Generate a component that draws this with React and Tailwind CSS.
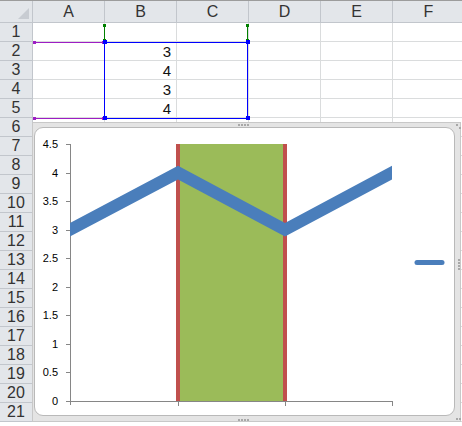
import React from "react";

const COLS = ["A", "B", "C", "D", "E", "F"];
const ROWS = Array.from({ length: 21 }, (_, i) => i + 1);
const VALUES = { 2: "3", 3: "4", 4: "3", 5: "4" };

const FONT = { fontFamily: "'Liberation Sans Narrow', 'Liberation Sans', sans-serif" };

// chart frame sits at page (32,122); svg coords are page coords minus that
const OX = 32;
const OY = 122;
const px = (x) => x - OX;
const py = (y) => y - OY;
const yOf = (v) => 400 - v * 57.1;

function Sheet() {
  return (
    <div
      className="grid grid-cols-[33px_repeat(6,72px)] grid-rows-[22px_repeat(21,19px)] border-t border-[#9c9c9c]"
      style={FONT}
    >
      <div className="flex items-end justify-end border-r border-b border-[#c2c6cc] bg-[#e3e6ea] p-[3px]">
        <div className="h-0 w-0 border-l-[11px] border-b-[11px] border-l-transparent border-b-[#c8ccd2]" />
      </div>
      {COLS.map((c) => (
        <div
          key={c}
          className="flex items-center justify-center border-r border-b border-[#c2c6cc] bg-[#e3e6ea] text-[16px] text-[#333] font-light"
        >
          {c}
        </div>
      ))}
      {ROWS.map((r) => (
        <React.Fragment key={r}>
          <div className="flex items-center justify-center border-r border-b border-[#c2c6cc] bg-[#e3e6ea] text-[16px] leading-none text-[#333] font-light">
            {r}
          </div>
          {COLS.map((c) => (
            <div
              key={c}
              className="flex items-center justify-end border-r border-b border-[#dadcdd] pr-[5px] text-[15px] leading-none text-[#111]"
            >
              {c === "B" ? VALUES[r] : null}
            </div>
          ))}
        </React.Fragment>
      ))}
    </div>
  );
}

// range highlight drawn over the sheet (series name, categories, values)
function Selection() {
  const purple = "#9d1dc4";
  const green = "#008000";
  const blue = "#0000ff";
  return (
    <svg className="pointer-events-none absolute left-0 top-0" width="462" height="130">
      <line x1="34" y1="42.5" x2="105" y2="42.5" stroke={purple} />
      <line x1="34" y1="118.5" x2="105" y2="118.5" stroke={purple} />
      <rect x="33" y="41" width="3" height="3" fill={purple} />
      <rect x="102" y="41" width="3" height="3" fill={purple} />
      <rect x="33" y="117" width="3" height="3" fill={purple} />
      <rect x="102" y="117" width="3" height="3" fill={purple} />

      <line x1="104.5" y1="24" x2="104.5" y2="42" stroke={green} />
      <line x1="247.5" y1="24" x2="247.5" y2="42" stroke={green} />
      <rect x="103" y="24" width="3" height="3" fill={green} />
      <rect x="246" y="24" width="3" height="3" fill={green} />
      <rect x="103" y="39" width="3" height="3" fill={green} />
      <rect x="246" y="39" width="3" height="3" fill={green} />

      <rect x="104.5" y="42.5" width="143" height="76" fill="none" stroke={blue} />
      <rect x="103" y="40" width="4" height="4" fill={blue} />
      <rect x="246" y="40" width="4" height="4" fill={blue} />
      <rect x="103" y="116" width="4" height="4" fill={blue} />
      <rect x="246" y="116" width="4" height="4" fill={blue} />
    </svg>
  );
}

function Chart() {
  const labels = ["0", "0.5", "1", "1.5", "2", "2.5", "3", "3.5", "4", "4.5"];
  const pts = [
    [40, yOf(2.73)],
    [177, yOf(4)],
    [284, yOf(3)],
    [420, yOf(4.27)],
  ];
  return (
    <div className="absolute left-[32px] top-[122px] h-[300px] w-[429px] border border-[#c8c8c8] bg-[#e4e4e4] pt-[4px] pr-[5px] pb-[5px] pl-px">
      <div className="h-full w-full rounded-[9px] border border-[#b9b9b9] bg-white" />
      <svg className="absolute left-0 top-0" width="429" height="300" style={FONT}>
        <defs>
          <clipPath id="plot">
            <rect x={px(69)} y={0} width={391 - 69} height={300} />
          </clipPath>
        </defs>
        {/* bar */}
        <rect x={px(179)} y={py(143)} width={103} height={257} fill="#9bbb59" />
        <rect x={px(175)} y={py(143)} width={4} height={257} fill="#c0504d" />
        <rect x={px(282)} y={py(143)} width={4} height={257} fill="#c0504d" />
        {/* axes */}
        <line x1={px(69.5)} y1={py(143)} x2={px(69.5)} y2={py(404)} stroke="#868686" />
        <line x1={px(69)} y1={py(400.5)} x2={px(391)} y2={py(400.5)} stroke="#868686" />
        {labels.map((l, i) => {
          const y = yOf(i * 0.5);
          return (
            <g key={l}>
              <line x1={px(65)} y1={py(Math.round(y)) + 0.5} x2={px(69)} y2={py(Math.round(y)) + 0.5} stroke="#868686" />
              <text
                x={px(57)}
                y={py(y) + 4}
                textAnchor="end"
                fontSize="11"
                fill="#000"
                fontFamily="'Liberation Sans', sans-serif"
              >
                {l}
              </text>
            </g>
          );
        })}
        {[177, 284, 391].map((x) => (
          <line key={x} x1={px(x) + 0.5} y1={py(400)} x2={px(x) + 0.5} y2={py(405)} stroke="#868686" />
        ))}
        {/* line series */}
        <polyline
          clipPath="url(#plot)"
          points={pts.map(([x, y]) => `${px(x)},${py(y)}`).join(" ")}
          fill="none"
          stroke="#4a7ebb"
          strokeWidth="12"
          strokeLinejoin="miter"
        />
        {/* legend */}
        <line x1={px(416)} y1={py(261.5)} x2={px(441)} y2={py(261.5)} stroke="#4a7ebb" strokeWidth="5" strokeLinecap="round" />
        {/* resize handles */}
        {[0, 3, 6, 9].map((d) => (
          <rect key={"t" + d} x={px(237 + d)} y={1} width={2} height={2} fill="#a8a8a8" />
        ))}
        {[0, 3, 6, 9].map((d) => (
          <rect key={"b" + d} x={px(237 + d)} y={296} width={2} height={2} fill="#a8a8a8" />
        ))}
        {[0, 3, 6, 9].map((d) => (
          <rect key={"r" + d} x={425} y={py(258 + d)} width={2} height={2} fill="#a8a8a8" />
        ))}
        <rect x={423} y={1} width={2} height={2} fill="#a8a8a8" />
        <rect x={426} y={4} width={2} height={2} fill="#a8a8a8" />
        <rect x={423} y={295} width={2} height={2} fill="#a8a8a8" />
        <rect x={426} y={295} width={2} height={2} fill="#a8a8a8" />
      </svg>
    </div>
  );
}

export default function App() {
  return (
    <div className="relative h-[426px] w-[462px] overflow-hidden bg-white">
      <Sheet />
      <Selection />
      <Chart />
    </div>
  );
}
